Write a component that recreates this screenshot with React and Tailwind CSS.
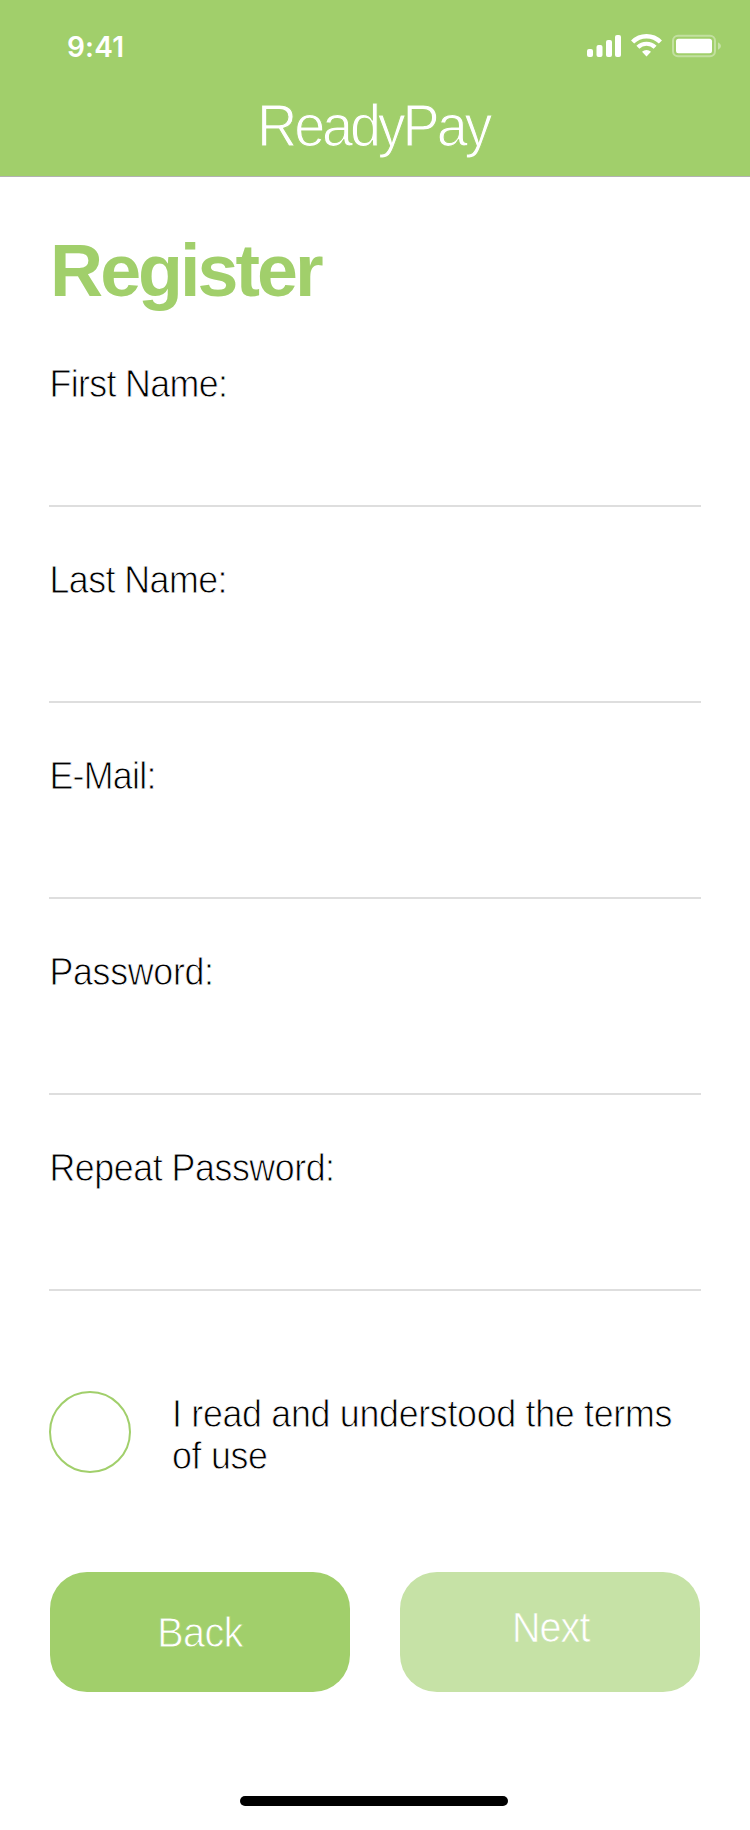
const fields = [
  { label: "First Name:", type: "text", tracking: "tracking-[-0.7px]" },
  { label: "Last Name:", type: "text", tracking: "tracking-[-0.6px]" },
  { label: "E-Mail:", type: "email", tracking: "tracking-[-0.8px]" },
  { label: "Password:", type: "password", tracking: "tracking-[-0.35px]" },
  { label: "Repeat Password:", type: "password", tracking: "tracking-[-0.5px]" },
];

// A stroke in the background colour slims the regular weight down to a light one.
const thinOnWhite = "[-webkit-text-stroke:0.85px_#ffffff]";

function StatusBar() {
  return (
    <div className="flex h-[89px] items-start justify-between pl-[67px] pr-[29px] pt-[34px]">
      <span className="font-['Inter',sans-serif] text-[28px] font-[560] leading-[26px] tracking-[0.2px] text-white">
        9:41
      </span>
      <svg width="134" height="24" viewBox="0 0 134 24" fill="#fff" aria-hidden="true">
        <rect x="0" y="15" width="6" height="8" rx="2" />
        <rect x="9.5" y="11" width="6" height="12" rx="2" />
        <rect x="19" y="6" width="6" height="17" rx="2" />
        <rect x="28" y="1" width="6" height="22" rx="2" />
        <g fill="none" stroke="#fff">
          <path d="M45.6 8 A19.6 19.6 0 0 1 73.4 8" strokeWidth="4.4" />
          <path d="M50.9 13.3 A12.2 12.2 0 0 1 68.1 13.3" strokeWidth="4.2" />
        </g>
        <path d="M55 17.8 A6.6 6.6 0 0 1 64 17.8 L59.5 22.6 Z" />
        <rect x="86" y="1.7" width="42" height="20.6" rx="5" fill="none" stroke="#fff" strokeOpacity="0.36" strokeWidth="2" />
        <rect x="89" y="4.7" width="36" height="14.6" rx="2.5" />
        <path d="M131 8.2 Q134 9.6 134 12 Q134 14.4 131 15.8 Z" fillOpacity="0.4" />
      </svg>
    </div>
  );
}

export default function App() {
  return (
    <main className="flex h-[1830px] w-[750px] flex-col bg-white font-['Liberation_Sans',Arial,sans-serif] text-black">
      <header className="h-[177px] border-b border-[#b2b2b2] bg-[#a1cf6b]">
        <StatusBar />
        <div className="pl-[257px] text-[59px] leading-[74px] text-white">
          <span className="inline-block origin-left scale-x-[0.945] whitespace-nowrap tracking-[-3.3px] [-webkit-text-stroke:1.1px_#a1cf6b]">
            ReadyPay
          </span>
        </div>
      </header>

      <form className="flex flex-col pt-[49px]">
        <h1 className="h-[136px] pl-[50px] text-[75px] font-bold leading-[89px] text-[#a1cf6b]">
          <span className="inline-block origin-left scale-x-[0.98] tracking-[-3px]">Register</span>
        </h1>

        <div className="flex flex-col px-[49px]">
          {fields.map((field) => (
            <label key={field.label} className="mb-[51px] flex h-[145px] flex-col border-b-2 border-[#dedede]">
              <span
                className={`block w-fit origin-left scale-x-[0.93] whitespace-nowrap pl-[0.5px] text-[38.5px] leading-[44px] ${thinOnWhite} ${field.tracking}`}
              >
                {field.label}
              </span>
              <input type={field.type} className="w-full flex-1 bg-transparent outline-none" />
            </label>
          ))}
        </div>

        <div className="mt-[49px] flex items-start pl-[49px]">
          <button type="button" aria-label="Accept terms" className="size-[82px] shrink-0 rounded-full border-2 border-[#a1cf6b]" />
          <p className={`ml-[40.5px] mt-[2px] w-[560px] origin-left scale-x-[0.93] whitespace-nowrap text-[38.5px] leading-[42px] tracking-[-0.33px] ${thinOnWhite}`}>
            I read and understood the terms
            <br />
            of use
          </p>
        </div>

        <div className="mt-[95px] flex gap-[50px] px-[50px] text-[42.5px] leading-[110px] text-white">
          <button type="button" className="h-[120px] w-[300px] rounded-[37px] bg-[#a1cf6b] pt-[2px]">
            <span className="inline-block scale-x-[0.93] tracking-[-0.6px] [-webkit-text-stroke:0.8px_#a1cf6b]">Back</span>
          </button>
          <button type="button" className="h-[120px] w-[300px] rounded-[37px] bg-[#c6e2a6] pb-[8px] pl-[1px]">
            <span className="inline-block scale-x-[0.93] tracking-[-1px] [-webkit-text-stroke:0.7px_#c6e2a6]">Next</span>
          </button>
        </div>
      </form>

      <div className="ml-[240px] mt-[104px] h-[10px] w-[268px] rounded-full bg-black" />
    </main>
  );
}
